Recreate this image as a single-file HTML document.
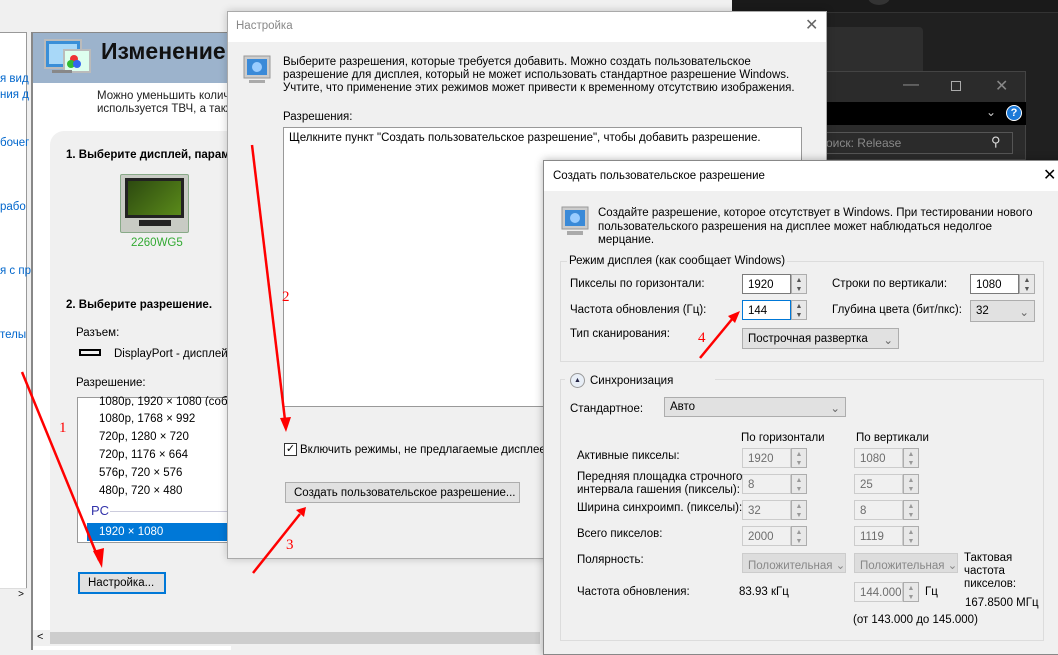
<!DOCTYPE html>
<html><head><meta charset="utf-8"><style>
*{margin:0;padding:0;box-sizing:border-box}
body{width:1058px;height:650px;overflow:hidden;position:relative;background:#f0f0f0;font-family:"Liberation Sans",sans-serif;font-size:11.5px;color:#000}
.a{position:absolute;white-space:nowrap}
.t{position:absolute;white-space:nowrap}
.inp{position:absolute;background:#fff;border:1px solid #7a7a7a;padding:4px 5px;font-size:11.5px}
.dis{background:#f0f0f0;border-color:#ccc;color:#6d6d6d}
.spin{position:absolute;width:16px;border:1px solid #adadad;background:#e8e8e8;font-size:7px;color:#555;text-align:center;line-height:9px;padding-top:1px}
.sel{position:absolute;background:#e1e1e1;border:1px solid #adadad;padding:4px 5px;font-size:11.5px;white-space:nowrap}
.blue{color:#0066cc}
</style></head><body>
<div class="a" style="left:0;top:32px;width:27px;height:572px;background:#fff;border-right:1px solid #999;border-top:1px solid #999"></div>
<div class="t blue" style="left:0;top:73px">я вид</div>
<div class="t blue" style="left:0;top:89px">ния д</div>
<div class="t blue" style="left:0;top:137px">бочег</div>
<div class="t blue" style="left:0;top:201px">рабо</div>
<div class="t blue" style="left:0;top:265px">я с пр</div>
<div class="t blue" style="left:0;top:329px">телы</div>
<div class="a" style="left:0;top:588px;width:27px;height:16px;background:#f0f0f0;border-top:1px solid #ddd;font-size:10px;text-align:right;padding-right:3px">&gt;</div>
<div class="a" style="left:31px;top:32px;width:200px;height:618px;background:#fff;border-left:2px solid #888;border-top:1px solid #888"></div>
<div class="a" style="left:33px;top:33px;width:200px;height:50px;background:#9cb3cc"></div>
<svg class="a" style="left:44px;top:38px" width="50" height="42"><rect x="1" y="2" width="36" height="28" fill="#3a8fd8" stroke="#bbb" stroke-width="2"/><rect x="5" y="6" width="28" height="20" fill="#a8d8f8"/><rect x="20" y="12" width="26" height="22" fill="#dfe" stroke="#bbb" stroke-width="2"/><circle cx="30" cy="21" r="4" fill="#e33"/><circle cx="27" cy="26" r="4" fill="#3b3"/><circle cx="33" cy="26" r="4" fill="#36e"/><rect x="8" y="32" width="20" height="3" fill="#888"/></svg>
<div class="t" style="left:101px;top:38px;font-size:23px;font-weight:bold;color:#111">Изменение</div>
<div class="t" style="left:97px;top:90px;color:#222">Можно уменьшить количе</div>
<div class="t" style="left:97px;top:103px;color:#222">используется ТВЧ, а такж</div>
<div class="a" style="left:50px;top:131px;width:200px;height:500px;background:#f0f0f0;border-radius:14px 0 0 0"></div>
<div class="t" style="left:66px;top:149px;font-weight:bold;font-size:11.5px">1. Выберите дисплей, парам</div>
<div class="a" style="left:120px;top:174px;width:69px;height:59px;background:#c8cbc4;border:1px solid #8a8;border-radius:2px"></div>
<div class="a" style="left:125px;top:178px;width:59px;height:40px;background:#222;padding:3px"><div style="width:100%;height:100%;background:linear-gradient(135deg,#2d4a10,#5a8a1a)"></div></div>
<div class="a" style="left:139px;top:220px;width:32px;height:6px;background:#222"></div>
<div class="t" style="left:131px;top:237px;color:#3a3">2260WG5</div>
<div class="t" style="left:66px;top:299px;font-weight:bold;font-size:11.5px">2. Выберите разрешение.</div>
<div class="t" style="left:76px;top:327px">Разъем:</div>
<div class="a" style="left:79px;top:349px;width:22px;height:7px;border:2px solid #000"></div>
<div class="t" style="left:114px;top:348px">DisplayPort - дисплей н</div>
<div class="t" style="left:76px;top:377px">Разрешение:</div>
<div class="a" style="left:77px;top:397px;width:160px;height:146px;background:#fff;border:1px solid #999"></div>
<div class="t" style="left:99px;top:396px;height:10px;overflow:hidden">1080p, 1920 × 1080 (собс</div>
<div class="t" style="left:99px;top:413px">1080p, 1768 × 992</div>
<div class="t" style="left:99px;top:431px">720p, 1280 × 720</div>
<div class="t" style="left:99px;top:449px">720p, 1176 × 664</div>
<div class="t" style="left:99px;top:467px">576p, 720 × 576</div>
<div class="t" style="left:99px;top:485px">480p, 720 × 480</div>
<div class="t" style="left:91px;top:503px;color:#33a;font-size:13px">PC</div>
<div class="a" style="left:110px;top:511px;width:120px;height:1px;background:#ccd"></div>
<div class="a" style="left:87px;top:523px;width:150px;height:18px;background:#0078d7"></div>
<div class="t" style="left:99px;top:526px;color:#fff">1920 × 1080</div>
<div class="a" style="left:78px;top:572px;width:88px;height:22px;background:#e1e1e1;border:2px solid #0078d7;padding:3px 8px">Настройка...</div>
<div class="a" style="left:33px;top:630px;width:510px;height:16px;background:#f0f0f0"></div>
<div class="a" style="left:50px;top:632px;width:490px;height:12px;background:#cdcdcd"></div>
<div class="t" style="left:37px;top:631px;font-size:11px">&lt;</div>
<div class="a" style="left:732px;top:0;width:326px;height:160px;background:#202020"></div>
<div class="a" style="left:732px;top:0;width:326px;height:13px;background:#1a1a1a;border-bottom:1px solid #333"></div>
<div class="a" style="left:868px;top:-10px;width:22px;height:15px;border-radius:50%;background:#333"></div>
<div class="a" style="left:800px;top:27px;width:123px;height:50px;background:#2e2e2e;border-radius:4px"></div>
<div class="a" style="left:800px;top:71px;width:226px;height:89px;background:#2b2b2b;border:1px solid #444"></div>
<div class="t" style="left:903px;top:76px;color:#888;font-size:16px">—</div>
<div class="a" style="left:951px;top:81px;width:10px;height:10px;border:1px solid #aaa"></div>
<div class="t" style="left:995px;top:76px;color:#888;font-size:16px">✕</div>
<div class="a" style="left:800px;top:102px;width:226px;height:23px;background:#000"></div>
<div class="t" style="left:986px;top:105px;color:#ccc;font-size:12px">⌄</div>
<div class="a" style="left:1006px;top:105px;width:16px;height:16px;border-radius:50%;background:#1c7ad8;border:1px solid #fff;color:#fff;font-size:11px;font-weight:bold;text-align:center;line-height:14px">?</div>
<div class="a" style="left:800px;top:132px;width:213px;height:22px;border:1px solid #555"></div>
<div class="t" style="left:826px;top:136px;color:#888;font-size:12px">оиск: Release</div>
<div class="t" style="left:991px;top:134px;color:#ddd;font-size:13px">⚲</div>
<div class="a" style="left:227px;top:11px;width:600px;height:548px;background:#f0f0f0;border:1px solid #aaa;box-shadow:0 0 8px rgba(0,0,0,.2)"></div>
<div class="a" style="left:228px;top:12px;width:598px;height:30px;background:#fff"></div>
<div class="t" style="left:236px;top:20px;color:#888">Настройка</div>
<div class="t" style="left:805px;top:15px;color:#666;font-size:16px">✕</div>
<svg class="a" style="left:243px;top:55px" width="28" height="32"><rect x="1" y="1" width="26" height="22" fill="#ccc" stroke="#999"/><rect x="4" y="4" width="20" height="16" fill="#3a8ad8"/><circle cx="14" cy="12" r="5" fill="#9cf"/><rect x="6" y="25" width="16" height="3" fill="#aaa"/></svg>
<div class="t" style="left:283px;top:56px;line-height:13px">Выберите разрешения, которые требуется добавить. Можно создать пользовательское<br>разрешение для дисплея, который не может использовать стандартное разрешение Windows.<br>Учтите, что применение этих режимов может привести к временному отсутствию изображения.</div>
<div class="t" style="left:283px;top:111px">Разрешения:</div>
<div class="a" style="left:283px;top:127px;width:519px;height:280px;background:#fff;border:1px solid #999"></div>
<div class="t" style="left:289px;top:132px">Щелкните пункт "Создать пользовательское разрешение", чтобы добавить разрешение.</div>
<div class="a" style="left:284px;top:443px;width:13px;height:13px;border:1px solid #333;background:#fff;font-size:11px;line-height:11px;text-align:center">✓</div>
<div class="t" style="left:300px;top:444px">Включить режимы, не предлагаемые дисплеем</div>
<div class="a" style="left:285px;top:482px;width:235px;height:21px;background:#e1e1e1;border:1px solid #adadad;padding:4px 8px">Создать пользовательское разрешение...</div>
<div class="a" style="left:543px;top:160px;width:520px;height:495px;background:#f0f0f0;border:1px solid #888;box-shadow:0 0 8px rgba(0,0,0,.3)"></div>
<div class="a" style="left:544px;top:161px;width:514px;height:30px;background:#fff"></div>
<div class="t" style="left:553px;top:170px">Создать пользовательское разрешение</div>
<div class="t" style="left:1043px;top:165px;font-size:16px">✕</div>
<svg class="a" style="left:561px;top:206px" width="28" height="32"><rect x="1" y="1" width="26" height="22" fill="#ccc" stroke="#999"/><rect x="4" y="4" width="20" height="16" fill="#3a8ad8"/><circle cx="14" cy="12" r="5" fill="#9cf"/><rect x="6" y="25" width="16" height="4" fill="#aaa"/></svg>
<div class="t" style="left:598px;top:207px;line-height:13.5px">Создайте разрешение, которое отсутствует в Windows. При тестировании нового<br>пользовательского разрешения на дисплее может наблюдаться недолгое<br>мерцание.</div>
<div class="a" style="left:560px;top:261px;width:484px;height:101px;border:1px solid #dcdcdc"></div>
<div class="t" style="left:567px;top:255px;background:#f0f0f0;padding:0 2px">Режим дисплея (как сообщает Windows)</div>
<div class="t" style="left:570px;top:278px">Пикселы по горизонтали:</div>
<div class="inp" style="left:742px;top:274px;width:49px;height:20px">1920</div>
<div class="spin" style="left:791px;top:274px;height:20px">▲<br>▼</div>
<div class="t" style="left:832px;top:278px">Строки по вертикали:</div>
<div class="inp" style="left:970px;top:274px;width:49px;height:20px">1080</div>
<div class="spin" style="left:1019px;top:274px;height:20px">▲<br>▼</div>
<div class="t" style="left:570px;top:304px">Частота обновления (Гц):</div>
<div class="inp" style="left:742px;top:300px;width:49px;height:20px;border-color:#0078d7">144</div>
<div class="spin" style="left:791px;top:300px;height:20px">▲<br>▼</div>
<div class="t" style="left:832px;top:304px">Глубина цвета (бит/пкс):</div>
<div class="sel" style="left:970px;top:300px;width:65px;height:22px">32<span style="float:right;color:#666">⌄</span></div>
<div class="t" style="left:570px;top:328px">Тип сканирования:</div>
<div class="sel" style="left:742px;top:328px;width:157px;height:21px">Построчная развертка<span style="float:right;color:#666">⌄</span></div>
<div class="a" style="left:560px;top:379px;width:484px;height:262px;border:1px solid #dcdcdc"></div>
<div class="a" style="left:565px;top:370px;width:150px;height:20px;background:#f0f0f0"></div>
<div class="a" style="left:570px;top:373px;width:15px;height:15px;border-radius:50%;border:1px solid #999;background:#e8eef6;font-size:7px;text-align:center;line-height:13px;color:#224">▲</div>
<div class="t" style="left:590px;top:375px">Синхронизация</div>
<div class="t" style="left:570px;top:403px">Стандартное:</div>
<div class="sel" style="left:664px;top:397px;width:182px;height:20px;padding-top:3px">Авто<span style="float:right;color:#666">⌄</span></div>
<div class="t" style="left:741px;top:432px">По горизонтали</div>
<div class="t" style="left:856px;top:432px">По вертикали</div>
<div class="t" style="left:577px;top:450px">Активные пикселы:</div>
<div class="t" style="left:577px;top:471px;line-height:13px">Передняя площадка строчного<br>интервала гашения (пикселы):</div>
<div class="t" style="left:577px;top:502px">Ширина синхроимп. (пикселы):</div>
<div class="t" style="left:577px;top:528px">Всего пикселов:</div>
<div class="t" style="left:577px;top:554px">Полярность:</div>
<div class="t" style="left:577px;top:586px">Частота обновления:</div>
<div class="inp dis" style="left:742px;top:448px;width:49px;height:20px">1920</div><div class="spin" style="left:791px;top:448px;height:20px;color:#999">▲<br>▼</div>
<div class="inp dis" style="left:742px;top:474px;width:49px;height:20px">8</div><div class="spin" style="left:791px;top:474px;height:20px;color:#999">▲<br>▼</div>
<div class="inp dis" style="left:742px;top:500px;width:49px;height:20px">32</div><div class="spin" style="left:791px;top:500px;height:20px;color:#999">▲<br>▼</div>
<div class="inp dis" style="left:742px;top:526px;width:49px;height:20px">2000</div><div class="spin" style="left:791px;top:526px;height:20px;color:#999">▲<br>▼</div>
<div class="inp dis" style="left:854px;top:448px;width:49px;height:20px">1080</div><div class="spin" style="left:903px;top:448px;height:20px;color:#999">▲<br>▼</div>
<div class="inp dis" style="left:854px;top:474px;width:49px;height:20px">25</div><div class="spin" style="left:903px;top:474px;height:20px;color:#999">▲<br>▼</div>
<div class="inp dis" style="left:854px;top:500px;width:49px;height:20px">8</div><div class="spin" style="left:903px;top:500px;height:20px;color:#999">▲<br>▼</div>
<div class="inp dis" style="left:854px;top:526px;width:49px;height:20px">1119</div><div class="spin" style="left:903px;top:526px;height:20px;color:#999">▲<br>▼</div>
<div class="sel" style="left:742px;top:553px;width:104px;height:20px;color:#888;background:#ddd;border-color:#ccc;overflow:hidden">Положительная ⌄</div>
<div class="sel" style="left:854px;top:553px;width:104px;height:20px;color:#888;background:#ddd;border-color:#ccc;overflow:hidden">Положительная ⌄</div>
<div class="t" style="left:964px;top:552px;line-height:13px">Тактовая<br>частота<br>пикселов:</div>
<div class="t" style="left:965px;top:597px">167.8500 МГц</div>
<div class="t" style="left:739px;top:586px">83.93 кГц</div>
<div class="inp dis" style="left:854px;top:582px;width:49px;height:20px">144.000</div><div class="spin" style="left:903px;top:582px;height:20px;color:#999">▲<br>▼</div>
<div class="t" style="left:925px;top:586px">Гц</div>
<div class="t" style="left:853px;top:614px">(от 143.000 до 145.000)</div>
<svg class="a" style="left:0;top:0" width="1058" height="650">
<g stroke="#f00" stroke-width="2.5" fill="#f00">
<line x1="22" y1="372" x2="99" y2="560"/><polygon points="102,568 93,551 104,548" stroke="none"/>
<line x1="252" y1="145" x2="285" y2="420"/><polygon points="286,432 280,418 291,417" stroke="none"/>
<line x1="253" y1="573" x2="300" y2="514"/><polygon points="306,507 296,510 304,517" stroke="none"/>
<line x1="700" y1="358" x2="733" y2="318"/><polygon points="740,311 728,316 735,323" stroke="none"/>
</g>
<g fill="#f00" font-family="Liberation Serif" font-size="15"><text x="59" y="432">1</text><text x="282" y="301">2</text><text x="286" y="549">3</text><text x="698" y="342">4</text></g>
</svg>
</body></html>
